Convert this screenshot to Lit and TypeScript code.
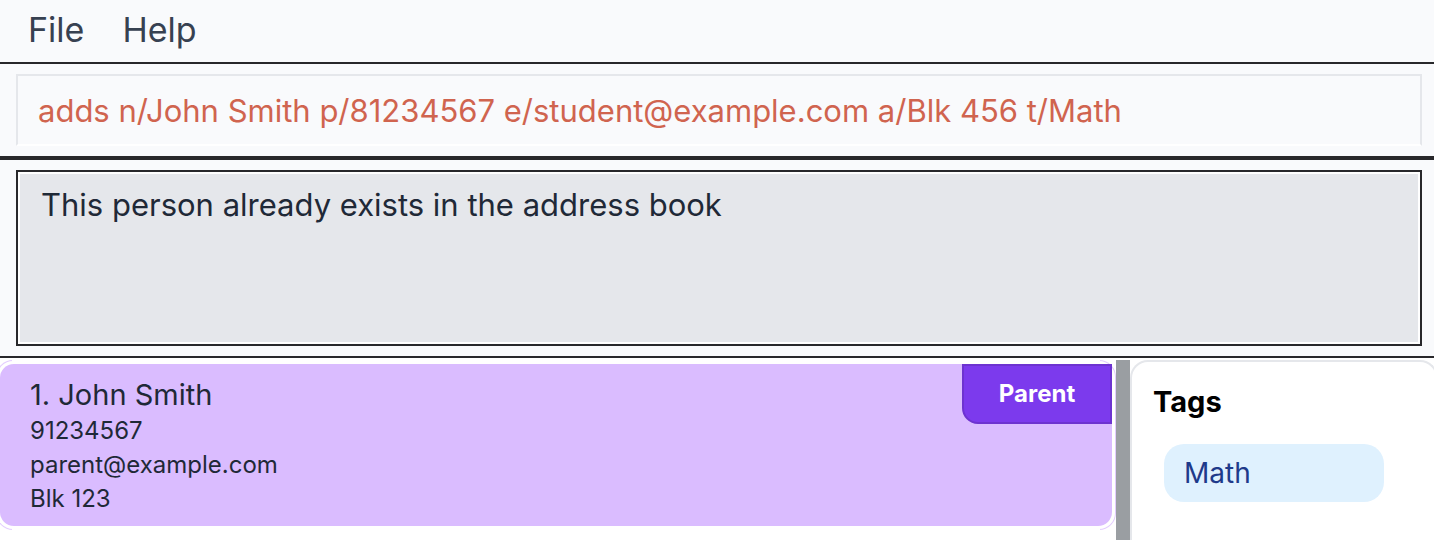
import { LitElement, html, css } from "lit";
import { customElement, property, state } from "lit/decorators.js";

interface Person {
  name: string;
  phone: string;
  email: string;
  address: string;
  role: string;
}

@customElement("person-card")
class PersonCard extends LitElement {
  @property({ type: Number }) index = 1;
  @property({ attribute: false }) person!: Person;

  static styles = css`
    :host {
      display: block;
    }
    /* Thin outline that shows only around the rounded corners. */
    .ring {
      margin-left: -4px;
      border: 1px solid transparent;
      border-radius: 17px;
      padding: 3px;
      background:
        linear-gradient(#fff, #fff) padding-box,
        linear-gradient(
            to right,
            #e3ccff 16px,
            #fff 16px,
            #fff calc(100% - 16px),
            #e3ccff calc(100% - 16px)
          )
          border-box;
      background-size:
        auto,
        100% 100%;
    }
    .card {
      display: flex;
      justify-content: space-between;
      align-items: flex-start;
      border-radius: 14px;
      background: #dabcff;
      color: #1f2937;
    }
    .details {
      padding: 12px 30px 10px;
      min-width: 0;
    }
    .name {
      margin: 0;
      font-size: 29px;
      font-weight: 400;
      line-height: 38px;
    }
    .line {
      margin: 0;
      font-size: 24px;
      line-height: 34px;
    }
    .role {
      box-sizing: border-box;
      width: 150px;
      border: 2px solid #6d33d0;
      border-bottom-left-radius: 16px;
      background: #7c3aed;
      color: #fff;
      font-size: 24px;
      font-weight: 700;
      line-height: 56px;
      text-align: center;
    }
  `;

  render() {
    const p = this.person;
    return html`
      <div class="ring">
        <article class="card">
          <div class="details">
            <h3 class="name">${this.index}. ${p.name}</h3>
            <p class="line">${p.phone}</p>
            <p class="line">${p.email}</p>
            <p class="line">${p.address}</p>
          </div>
          <span class="role">${p.role}</span>
        </article>
      </div>
    `;
  }
}

@customElement("app-root")
class AppRoot extends LitElement {
  @state() private command =
    "adds n/John Smith p/81234567 e/student@example.com a/Blk 456 t/Math";
  @state() private result = "This person already exists in the address book";

  private people: Person[] = [
    {
      name: "John Smith",
      phone: "91234567",
      email: "parent@example.com",
      address: "Blk 123",
      role: "Parent",
    },
  ];
  private tags = ["Math"];

  static styles = css`
    :host {
      display: flex;
      flex-direction: column;
      min-height: 100vh;
      overflow: hidden;
      background: #fff;
      font-family: Inter, "Liberation Sans", sans-serif;
    }
    .menu {
      display: flex;
      gap: 38px;
      padding: 8px 28px 10px;
      border-bottom: 2px solid #28282b;
      background: #f9fafc;
    }
    .menu-item {
      padding: 0;
      border: 0;
      background: none;
      color: #374151;
      font: inherit;
      font-size: 34px;
      line-height: 44px;
    }
    .command-bar {
      display: flex;
      padding: 10px 12px 10px 16px;
      border-bottom: 4px solid #28282b;
      background: #f9fafc;
    }
    .command {
      box-sizing: border-box;
      flex: 1;
      min-width: 0;
      height: 72px;
      padding: 0 20px;
      border: 2px solid #e5e7eb;
      border-bottom-color: #fff;
      border-radius: 0;
      outline: 0;
      background: #f9fafc;
      color: #d0644f;
      font: inherit;
      font-size: 31px;
    }
    .result-bar {
      display: flex;
      padding: 10px 12px 10px 16px;
      border-bottom: 2px solid #28282b;
      background: #f9fafc;
    }
    .result {
      box-sizing: border-box;
      flex: 1;
      min-width: 0;
      height: 176px;
      padding: 13px 23px;
      border: 2px solid #28282b;
      outline: 0;
      resize: none;
      box-shadow: inset 0 0 0 2px #fff;
      background: #e5e7eb;
      color: #1f2937;
      font: inherit;
      font-size: 31px;
      line-height: 40px;
    }
    .main {
      display: flex;
      flex: 1;
      padding-top: 2px;
    }
    .people {
      flex: 1;
      min-width: 0;
    }
    .divider {
      width: 14px;
      background: #9a9ea2;
    }
    .tags {
      box-sizing: border-box;
      width: 308px;
      margin-right: -4px;
      padding: 20px 52px 20px 21px;
      border: 2px solid #e5e7eb;
      border-bottom: 0;
      border-radius: 18px 18px 0 0;
    }
    .tags-title {
      margin: 0 0 22px;
      color: #000;
      font-size: 29px;
      font-weight: 700;
      line-height: 40px;
    }
    .tag-list {
      margin: 0;
      padding: 0 0 0 11px;
      list-style: none;
    }
    .tag {
      padding: 0 20px;
      border-radius: 20px;
      background: #dff1fe;
      color: #1e3a8a;
      font-size: 28px;
      line-height: 58px;
    }
  `;

  private onInput(e: Event) {
    this.command = (e.target as HTMLInputElement).value;
  }

  render() {
    return html`
      <nav class="menu" aria-label="Main menu">
        <button class="menu-item" type="button">File</button>
        <button class="menu-item" type="button">Help</button>
      </nav>
      <div class="command-bar">
        <input
          class="command"
          type="text"
          aria-label="Command"
          spellcheck="false"
          .value=${this.command}
          @input=${this.onInput}
        />
      </div>
      <div class="result-bar">
        <textarea
          class="result"
          aria-label="Result"
          readonly
          spellcheck="false"
          .value=${this.result}
        ></textarea>
      </div>
      <main class="main">
        <section class="people" aria-label="Persons">
          ${this.people.map(
            (p, i) =>
              html`<person-card .index=${i + 1} .person=${p}></person-card>`,
          )}
        </section>
        <div class="divider" role="separator"></div>
        <aside class="tags">
          <h2 class="tags-title">Tags</h2>
          <ul class="tag-list">
            ${this.tags.map((t) => html`<li class="tag">${t}</li>`)}
          </ul>
        </aside>
      </main>
    `;
  }
}
